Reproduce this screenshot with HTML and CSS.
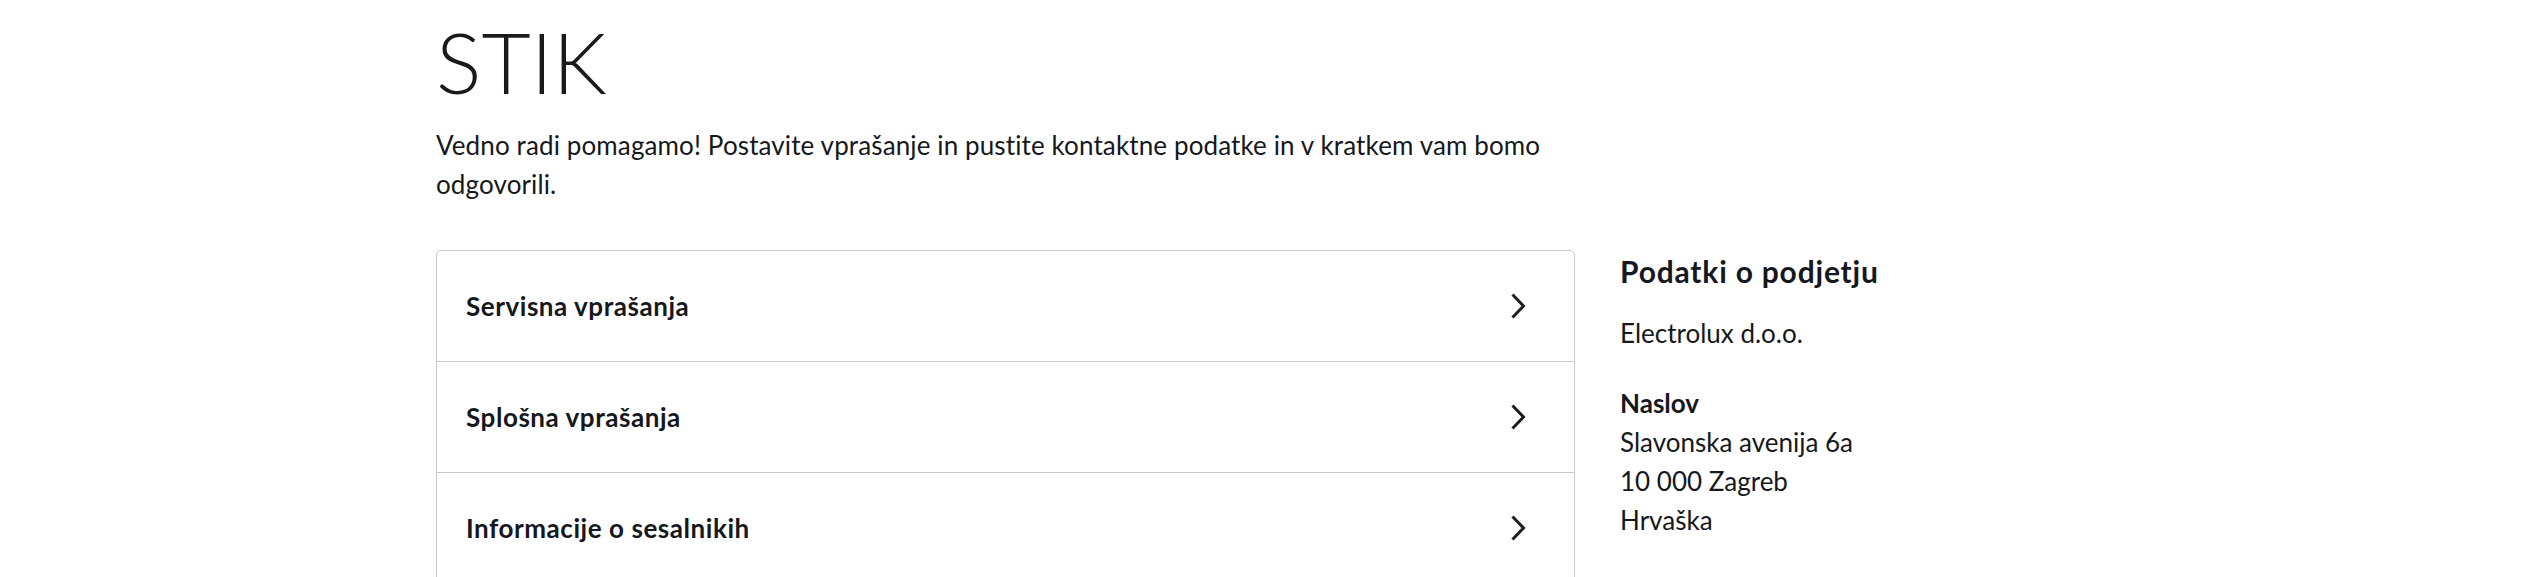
FILE: index.html
```html
<!DOCTYPE html>
<html lang="sl">
<head>
<meta charset="utf-8">
<title>STIK</title>
<link rel="stylesheet" href="styles.css">
</head>
<body>
<main class="page">
  <h1 class="title">STIK</h1>
  <p class="intro">Vedno radi pomagamo! Postavite vprašanje in pustite kontaktne podatke in v kratkem vam bomo odgovorili.</p>
  <div class="layout">
    <ul class="topics">
      <li class="topic"><span class="topic-label">Servisna vprašanja</span><svg class="chevron" width="16" height="28" viewBox="0 0 16 28"><polyline points="2.5,2.5 13.5,14 2.5,25.5"/></svg></li>
      <li class="topic"><span class="topic-label">Splošna vprašanja</span><svg class="chevron" width="16" height="28" viewBox="0 0 16 28"><polyline points="2.5,2.5 13.5,14 2.5,25.5"/></svg></li>
      <li class="topic"><span class="topic-label">Informacije o sesalnikih</span><svg class="chevron" width="16" height="28" viewBox="0 0 16 28"><polyline points="2.5,2.5 13.5,14 2.5,25.5"/></svg></li>
    </ul>
    <aside class="company">
      <h2 class="company-title">Podatki o podjetju</h2>
      <p class="company-name">Electrolux d.o.o.</p>
      <h3 class="company-label">Naslov</h3>
      <p class="company-address">Slavonska avenija 6a<br>10 000 Zagreb<br>Hrvaška</p>
    </aside>
  </div>
</main>
</body>
</html>
```
FILE: styles.css
```css
html, body {
  margin: 0;
  padding: 0;
  background: #ffffff;
}
body {
  font-family: "Lato", "Liberation Sans", sans-serif;
  color: #15181d;
  overflow: hidden;
}
.page {
  padding: 11px 0 0 436px;
  width: 1663px;
}
.title {
  margin: 0;
  font-size: 85px;
  line-height: 100px;
  font-weight: 300;
  color: #1a1a1a;
}
.intro {
  margin: 15px 0 0;
  width: 1139px;
  font-size: 26px;
  line-height: 39px;
  letter-spacing: 0.12px;
}
.layout {
  margin-top: 46px;
  display: grid;
  grid-template-columns: 1139px 1fr;
  column-gap: 45px;
  align-items: start;
}
.topics {
  list-style: none;
  margin: 0;
  padding: 0;
  border: 1px solid #c9c9c9;
  border-radius: 5px;
}
.topic {
  display: flex;
  align-items: center;
  justify-content: space-between;
  padding: 35.5px 48px 35.5px 29px;
  font-size: 26px;
  line-height: 39px;
  font-weight: 700;
  letter-spacing: 0.55px;
}
.topic + .topic {
  border-top: 1px solid #c9c9c9;
}
.chevron {
  fill: none;
  stroke: #1d1d1d;
  stroke-width: 3;
}
.company-title {
  margin: 0;
  font-size: 30px;
  line-height: 42px;
  font-weight: 700;
  letter-spacing: 0.8px;
}
.company-name {
  margin: 22px 0 0;
  font-size: 26px;
  line-height: 39px;
}
.company-label {
  margin: 31px 0 0;
  font-size: 26px;
  line-height: 39px;
  font-weight: 700;
}
.company-address {
  margin: 0;
  font-size: 26px;
  line-height: 39px;
}
```
